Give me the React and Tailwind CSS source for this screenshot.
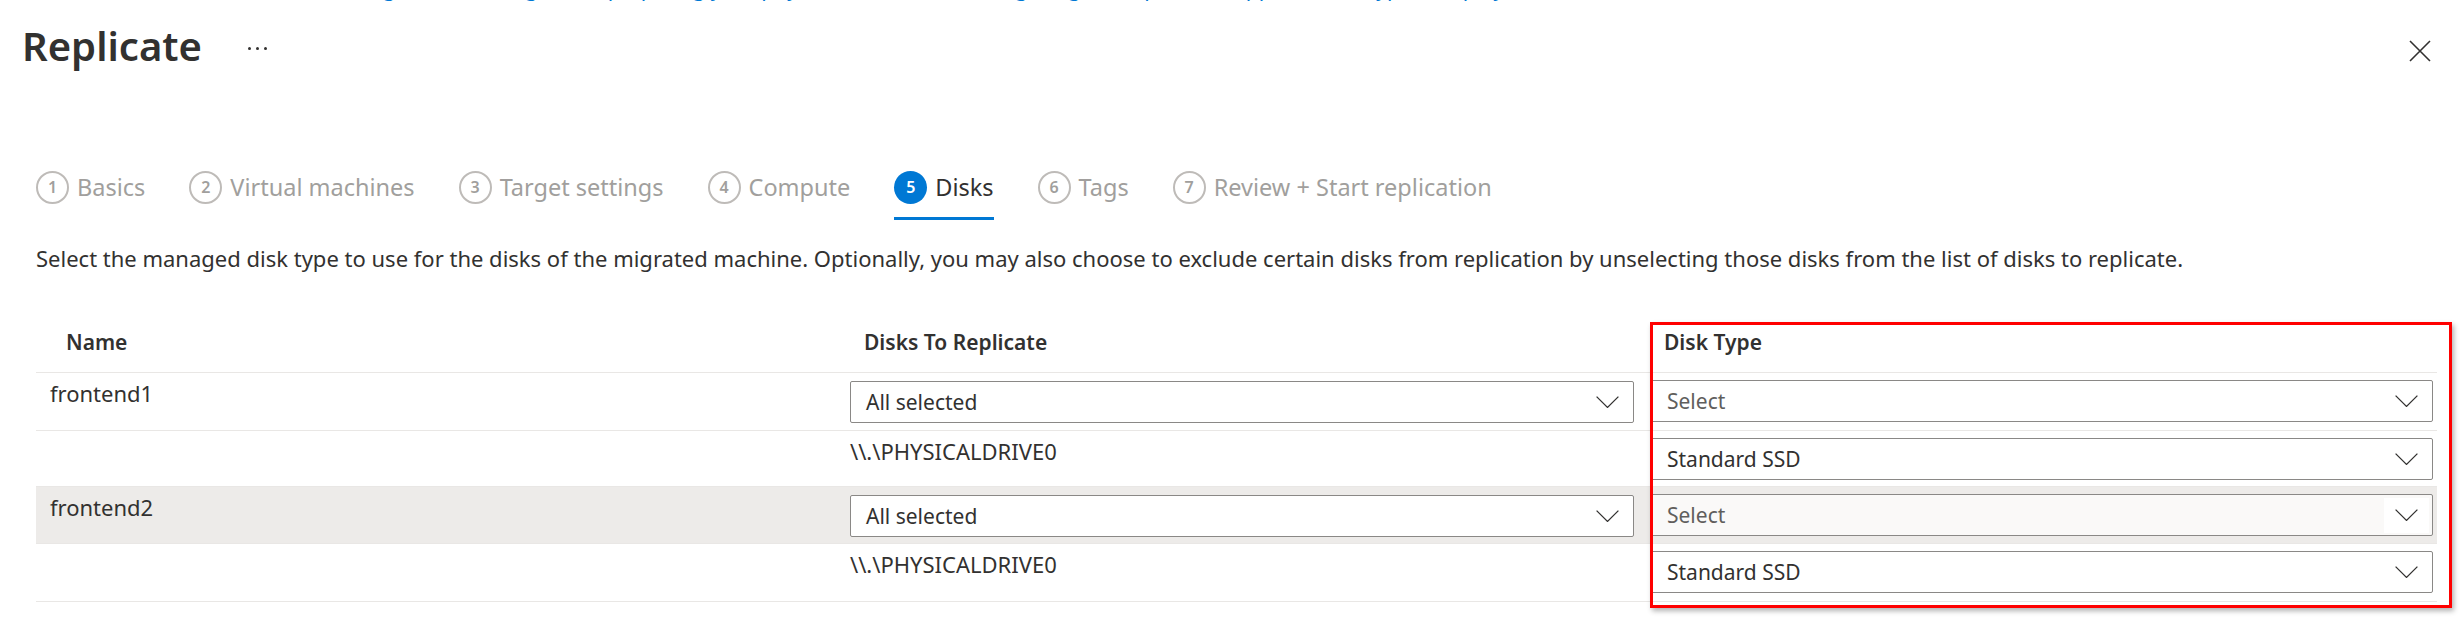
import React from "react";

const tabs = [
  { n: 1, label: "Basics" },
  { n: 2, label: "Virtual machines" },
  { n: 3, label: "Target settings" },
  { n: 4, label: "Compute" },
  { n: 5, label: "Disks", active: true },
  { n: 6, label: "Tags" },
  { n: 7, label: "Review + Start replication" },
];

const Chevron = () => (
  <svg width="23" height="12" viewBox="0 0 23 12" fill="none">
    <polyline points="0.6,0.6 11.5,11.4 22.4,0.6" stroke="#323130" strokeWidth="1.3" />
  </svg>
);

const Dropdown = ({ value, placeholder, shaded, width }) => (
  <div
    className={`${width} h-[42px] flex items-center justify-between border border-[#8a8886] rounded-[2px] pl-[15px] pr-[3px] ${
      shaded ? "bg-[#faf9f8]" : "bg-white"
    }`}
  >
    <span className={`text-[21px] leading-[30px] ${placeholder ? "text-[#605e5c]" : "text-[#323130]"}`}>
      {value}
    </span>
    <div className={`w-[45px] h-[35px] flex items-center justify-center ${shaded ? "bg-white" : ""}`}>
      <Chevron />
    </div>
  </div>
);

const Tab = ({ n, label, active }) => (
  <div className={active ? "pb-[13px] border-b-[3px] border-[#0078d4]" : "pb-[13px] border-b-[3px] border-transparent"}>
    <div className="flex items-center h-[34px] gap-[8px]">
      <span
        className={
          active
            ? "w-[33px] h-[33px] rounded-full bg-[#0078d4] text-white flex items-center justify-center text-[16px] font-semibold"
            : "w-[33px] h-[33px] rounded-full border-2 border-[#bebbb8] text-[#a19f9d] flex items-center justify-center text-[16px] font-semibold"
        }
      >
        {n}
      </span>
      <span className={active ? "text-[23.5px] leading-[34px] text-[#323130]" : "text-[23.5px] leading-[34px] text-[#a19f9d]"}>
        {label}
      </span>
    </div>
  </div>
);

const Row = ({ name, disk, type, placeholder, shaded, h }) => (
  <div className={`grid grid-cols-[814px_801px_786px] border-b border-[#e9e7e5] ${h} ${shaded ? "bg-[#edebe9]" : ""}`}>
    <div className="pl-[14px] pt-[5px] text-[22px] leading-[30px]">{name}</div>
    <div className={disk ? "pt-[5px] text-[22px] leading-[30px]" : "pt-[8px]"}>
      {disk ? disk : <Dropdown value="All selected" width="w-[784px]" />}
    </div>
    <div className="pt-[7px]">
      <Dropdown value={type} placeholder={placeholder} shaded={shaded} width="w-[782px]" />
    </div>
  </div>
);

export default function App() {
  return (
    <div className="relative w-[2463px] h-[638px] overflow-hidden bg-white text-[#323130] font-['Noto_Sans',sans-serif]">
      {/* link line scrolled past the top edge */}
      <div className="h-[5px] overflow-hidden pl-[188px]">
        <p className="-mt-[27px] text-[21px] leading-[30px] text-[#0078d4] whitespace-nowrap">
          Learn more about agent-based migration, preparing your physical servers and configuring the replication appliance for typical deployments
        </p>
      </div>

      {/* title bar */}
      <div className="flex items-start justify-between pl-[22px] pr-[32px] mt-[16px]">
        <div className="flex items-start">
          <h1 className="w-[226px] text-[40px] leading-[50px] font-semibold">Replicate</h1>
          <div className="mt-[26px] flex gap-[5px]">
            <span className="w-[3px] h-[3px] rounded-full bg-[#323130]" />
            <span className="w-[3px] h-[3px] rounded-full bg-[#323130]" />
            <span className="w-[3px] h-[3px] rounded-full bg-[#323130]" />
          </div>
        </div>
        <svg className="mt-[19px]" width="22" height="22" viewBox="0 0 22 22" fill="none">
          <path d="M1 1L21 21M21 1L1 21" stroke="#323130" strokeWidth="1.6" />
        </svg>
      </div>

      {/* wizard tabs */}
      <div className="flex gap-[44px] pl-[36px] mt-[99px]">
        {tabs.map((t) => (
          <Tab key={t.n} {...t} />
        ))}
      </div>

      <p className="pl-[36px] mt-[23px] text-[22px] leading-[30px] whitespace-nowrap">
        Select the managed disk type to use for the disks of the migrated machine. Optionally, you may also choose to exclude certain disks from replication by unselecting those disks from the list of disks to replicate.
      </p>

      {/* disks table */}
      <div className="ml-[36px] w-[2401px] mt-[49px]">
        <div className="grid grid-cols-[814px_801px_786px] h-[51px] border-b border-[#e9e7e5] font-semibold text-[21px] leading-[30px]">
          <div className="pl-[30px] pt-[5px]">Name</div>
          <div className="pl-[14px] pt-[5px]">Disks To Replicate</div>
          <div className="pl-[13px] pt-[5px]">Disk Type</div>
        </div>
        <Row name="frontend1" type="Select" placeholder h="h-[58px]" />
        <Row disk="\\.\PHYSICALDRIVE0" type="Standard SSD" h="h-[56px]" />
        <Row name="frontend2" type="Select" placeholder shaded h="h-[57px]" />
        <Row disk="\\.\PHYSICALDRIVE0" type="Standard SSD" h="h-[58px]" />
      </div>

      {/* annotation highlight */}
      <div className="absolute left-[1650px] top-[322px] w-[802px] h-[286px] border-[3px] border-[#ff0000] shadow-[2px_3px_5px_rgba(0,0,0,0.3)] pointer-events-none" />
    </div>
  );
}
